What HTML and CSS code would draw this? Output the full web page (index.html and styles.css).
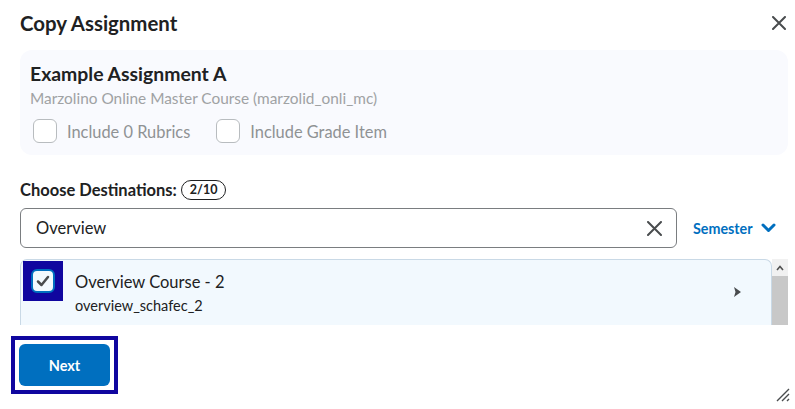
FILE: index.html
```html
<!DOCTYPE html>
<html lang="en">
<head>
    <meta charset="UTF-8">
    <title>Copy Assignment</title>
    <link rel="stylesheet" href="styles.css">
</head>
<body>
    <div class="dialog">
        <!-- Header -->
        <div class="dialog-header">
            <h1 class="dialog-title">Copy Assignment</h1>
            <button class="close-btn" aria-label="Close">
                <svg width="14" height="14" viewBox="0 0 14 14"><path d="M1 1 L13 13 M13 1 L1 13" stroke="#494c4e" stroke-width="2" stroke-linecap="round"/></svg>
            </button>
        </div>

        <!-- Source assignment -->
        <div class="source-card">
            <div class="source-title">Example Assignment A</div>
            <div class="source-course">Marzolino Online Master Course (marzolid_onli_mc)</div>
            <div class="source-options">
                <label class="option"><span class="checkbox"></span>Include 0 Rubrics</label>
                <label class="option"><span class="checkbox"></span>Include Grade Item</label>
            </div>
        </div>

        <!-- Destinations -->
        <div class="dest-label">Choose Destinations: <span class="count-badge">2/10</span></div>
        <div class="search-row">
            <div class="search-box">
                <span class="search-text">Overview</span>
                <svg class="clear-icon" width="15" height="15" viewBox="0 0 15 15"><path d="M1 1 L14 14 M14 1 L1 14" stroke="#494c4e" stroke-width="2" stroke-linecap="round"/></svg>
            </div>
            <button class="filter-btn">Semester
                <svg width="15" height="10" viewBox="0 0 15 10"><path d="M2 2 L7.5 7.5 L13 2" fill="none" stroke="#006fbf" stroke-width="3" stroke-linecap="round" stroke-linejoin="round"/></svg>
            </button>
        </div>

        <div class="results">
            <div class="result-list">
                <div class="result-item">
                    <span class="focus-ring"><span class="checkbox checked">
                        <svg width="14" height="12" viewBox="0 0 14 12"><path d="M2 6.5 L5.5 10 L12 2" fill="none" stroke="#494c4e" stroke-width="2.5" stroke-linecap="round" stroke-linejoin="round"/></svg>
                    </span></span>
                    <div class="result-text">
                        <div class="result-name">Overview Course - 2</div>
                        <div class="result-code">overview_schafec_2</div>
                    </div>
                    <svg class="expand-icon" width="7" height="10" viewBox="0 0 7 10"><path d="M0 0 L7 5 L0 10 L1.5 5 Z" fill="#494c4e"/></svg>
                </div>
            </div>
            <div class="scrollbar">
                <div class="scroll-up">
                    <svg width="8" height="6" viewBox="0 0 8 6"><path d="M1 5 L4 1.5 L7 5" fill="none" stroke="#505050" stroke-width="1.6"/></svg>
                </div>
                <div class="scroll-thumb"></div>
            </div>
        </div>

        <!-- Footer -->
        <div class="dialog-footer">
            <span class="btn-focus"><button class="primary-btn">Next</button></span>
        </div>

        <svg class="resize-grip" width="14" height="14" viewBox="0 0 14 14"><path d="M1 13 L13 1 M6 13 L13 6 M11 13 L13 11" stroke="#494c4e" stroke-width="1.4"/></svg>
    </div>
</body>
</html>
```

FILE: styles.css
```css
body {
    margin: 0;
    font-family: Lato, "Open Sans", sans-serif;
    color: #202122;
    background-color: #fff;
}
button {
    font-family: inherit;
    cursor: pointer;
}
.dialog {
    position: relative;
    width: 795px;
    height: 409px;
    padding: 0 7px 0 20px;
    box-sizing: border-box;
}
.dialog-header {
    display: flex;
    align-items: center;
    justify-content: space-between;
    height: 46px;
    margin-bottom: 4px;
}
.dialog-title {
    margin: 0;
    font-size: 20.4px;
    font-weight: 700;
}
.close-btn {
    border: none;
    background: none;
    padding: 0;
    margin-right: 2px;
    display: flex;
}
.source-card {
    background-color: #f9fafe;
    border-radius: 12px;
    padding: 12px 10px 12px 10px;
    height: 105px;
    box-sizing: border-box;
}
.source-title {
    font-size: 19.4px;
    font-weight: 700;
    line-height: 24px;
}
.source-course {
    margin-top: 2px;
    font-size: 15.4px;
    line-height: 20px;
    color: #a0a2a4;
}
.source-options {
    display: flex;
    gap: 26px;
    margin-top: 11px;
    padding-left: 3px;
}
.option {
    display: flex;
    align-items: center;
    gap: 10px;
    font-size: 16.4px;
    color: #8f9294;
}
.checkbox {
    display: inline-flex;
    align-items: center;
    justify-content: center;
    width: 24px;
    height: 24px;
    box-sizing: border-box;
    border: 1px solid #b8bcbf;
    border-radius: 6px;
    background-color: #fff;
}
.dest-label {
    margin-top: 25px;
    display: flex;
    align-items: center;
    gap: 4px;
    height: 20px;
    font-size: 16.5px;
    font-weight: 700;
}
.count-badge {
    display: inline-block;
    border: 1px solid #202122;
    border-radius: 10px;
    padding: 0 8px;
    font-size: 12.5px;
    line-height: 18px;
}
.search-row {
    display: flex;
    align-items: center;
    margin-top: 8px;
}
.search-box {
    width: 657px;
    height: 40px;
    box-sizing: border-box;
    border: 1px solid #7a7d80;
    border-radius: 6px;
    display: flex;
    align-items: center;
    justify-content: space-between;
    padding: 0 14px 0 15px;
}
.search-text {
    font-size: 16.5px;
    color: #202122;
}
.filter-btn {
    margin-left: 16px;
    border: none;
    background: none;
    padding: 0;
    display: flex;
    align-items: center;
    gap: 8px;
    color: #006fbf;
    font-size: 14.3px;
    font-weight: 700;
}
.results {
    display: flex;
    margin-top: 11px;
    height: 66px;
    overflow: hidden;
}
.result-list {
    flex: 1;
    background-color: #f2f9fe;
    border: 1px solid #c9d9e6;
    border-bottom: none;
    border-radius: 7px 7px 0 0;
}
.result-item {
    display: flex;
    align-items: flex-start;
    padding: 1px 30px 0 2px;
}
.focus-ring {
    display: inline-flex;
    padding: 8px;
    background-color: #10069f;
}
.checkbox.checked {
    border: 2px solid #006fbf;
    background-color: #f2f9fe;
}
.result-text {
    flex: 1;
    margin-left: 12px;
    padding-top: 10px;
}
.result-name {
    font-size: 16.5px;
    line-height: 22px;
}
.result-code {
    margin-top: 2px;
    font-size: 14.5px;
    line-height: 22px;
}
.expand-icon {
    margin-top: 26px;
}
.scrollbar {
    width: 16px;
    background-color: #f1f1f1;
    display: flex;
    flex-direction: column;
}
.scroll-up {
    height: 17px;
    display: flex;
    align-items: center;
    justify-content: center;
}
.scroll-thumb {
    flex: 1;
    background-color: #c8c8c8;
}
.dialog-footer {
    margin-top: 11px;
    margin-left: -9px;
}
.btn-focus {
    display: inline-flex;
    border: 4px solid #10069f;
    padding: 4px;
}
.primary-btn {
    width: 91px;
    height: 42px;
    border: none;
    border-radius: 6px;
    background-color: #006fbf;
    color: #fff;
    font-size: 14.5px;
    font-weight: 700;
}
.resize-grip {
    position: absolute;
    right: 5px;
    bottom: 7px;
}
```
